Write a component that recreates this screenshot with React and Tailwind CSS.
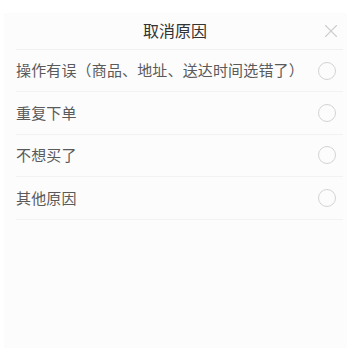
import { X } from 'lucide-react';

const reasons = ['操作有误（商品、地址、送达时间选错了）', '重复下单', '不想买了', '其他原因'];

export default function App() {
  return (
    <div className="w-[351px] h-[348px] bg-white pt-[13px] px-[4px] font-['Noto_Sans_CJK_SC',sans-serif]">
      <div className="h-full bg-[#fcfcfc] pl-[12px] pr-[4px]">
        <div className="relative flex items-center justify-center h-[37px] pb-[2px] pr-[9px] border-b border-[#f0f0f0]">
          <span className="text-[16px] text-[#333]">取消原因</span>
          <X className="absolute right-[1px] top-[7px] w-[22px] h-[22px] text-[#cdcdcd]" strokeWidth={1.2} />
        </div>
        {reasons.map((r) => (
          <div key={r} className="flex items-center justify-between h-[42.4px] border-b border-[#f2f2f2]">
            <span className="text-[15px] text-[#5a5a5a] tracking-[0.15px]">{r}</span>
            <span className="w-[18px] h-[18px] mr-[7px] rounded-full border border-[#d4d4d4]" />
          </div>
        ))}
      </div>
    </div>
  );
}
